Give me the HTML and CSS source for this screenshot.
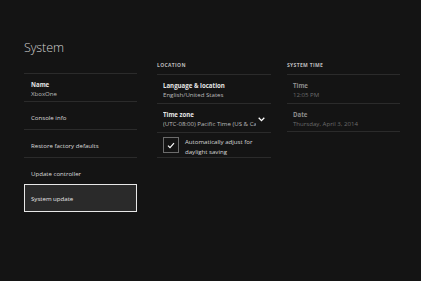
FILE: index.html
```html
<!DOCTYPE html>
<html>
<head>
<meta charset="utf-8">
<link rel="stylesheet" href="styles.css">
</head>
<body>
<div class="page">
  <h1 class="title">System</h1>
  <div class="columns">
    <div class="col col-left">
      <div class="row two">
        <div class="label">Name</div>
        <div class="value">XboxOne</div>
      </div>
      <div class="row one">Console info</div>
      <div class="row one">Restore factory defaults</div>
      <div class="row one">Update controller</div>
      <div class="row one selected">System update</div>
    </div>
    <div class="col col-mid">
      <div class="head">LOCATION</div>
      <div class="row two">
        <div class="label">Language &amp; location</div>
        <div class="value">English/United States</div>
      </div>
      <div class="row two tz">
        <div class="tz-text">
          <div class="label">Time zone</div>
          <div class="value clip">(UTC-08:00) Pacific Time (US &amp; Canada)</div>
        </div>
        <svg class="chev" width="7" height="5" viewBox="0 0 7 5"><path d="M0.7 0.8 L3.5 3.6 L6.3 0.8" fill="none" stroke="#fff" stroke-width="1.3"/></svg>
      </div>
      <div class="row check">
        <div class="box"><svg width="8" height="7" viewBox="0 0 8 7"><path d="M1 3.6 L3 5.6 L7 1.2" fill="none" stroke="#fff" stroke-width="1.2"/></svg></div>
        <div class="check-text">Automatically adjust for<br>daylight saving</div>
      </div>
    </div>
    <div class="col col-right">
      <div class="head">SYSTEM TIME</div>
      <div class="row two dim">
        <div class="label">Time</div>
        <div class="value">12:05 PM</div>
      </div>
      <div class="row two dim">
        <div class="label">Date</div>
        <div class="value">Thursday, April 3, 2014</div>
      </div>
    </div>
  </div>
</div>
</body>
</html>
```
FILE: styles.css
```css
html, body {
  margin: 0;
  padding: 0;
  background: #141414;
  width: 421px;
  height: 281px;
  overflow: hidden;
}
.page {
  padding: 39px 0 0 24px;
  font-family: "Open Sans", "Noto Sans", sans-serif;
  color: #d8d8d8;
}
.title {
  margin: 0;
  font-weight: 300;
  font-size: 12.5px;
  line-height: 17px;
  color: #cfcfcf;
  letter-spacing: -0.1px;
}
.columns {
  display: flex;
}
.col-left {
  width: 113px;
  margin-right: 20px;
  padding-top: 17px;
}
.col-mid {
  width: 114px;
  margin-right: 16px;
}
.col-right {
  width: 113px;
}
.head {
  height: 18px;
  font-size: 5px;
  font-weight: 700;
  letter-spacing: 0.35px;
  color: #bdbdbd;
  line-height: 18px;
}
.row {
  border-top: 1px solid #2b2b2b;
  box-sizing: border-box;
  font-size: 6.1px;
}
.col-left .row {
  height: 28px;
  padding-left: 7px;
}
.col-mid .row, .col-right .row {
  height: 29px;
  padding-left: 6px;
}
.row.two {
  padding-top: 6px;
  line-height: 9px;
}
.row.one {
  display: flex;
  align-items: center;
  padding-top: 3px;
  color: #dcdcdc;
}
.label {
  font-weight: 700;
  color: #e6e6e6;
}
.value {
  color: #bcbcbc;
}
.row.selected {
  background: #2a2a2a;
  border: 1.5px solid #e8e8e8;
  margin-top: -1px;
  padding-top: 0;
  padding-left: 6px;
  color: #e8e8e8;
}
.row.tz {
  display: flex;
  align-items: flex-start;
}
.tz-text {
  width: 93px;
  overflow: hidden;
}
.clip {
  white-space: nowrap;
  overflow: hidden;
}
.chev {
  margin-top: 7px;
  margin-left: 2px;
}
.row.check {
  display: flex;
  align-items: flex-start;
  height: 26px;
  padding-top: 4px;
  border-bottom: 1px solid #2b2b2b;
}
.box {
  width: 16px;
  height: 16px;
  box-sizing: border-box;
  border: 1px solid #6c6c6c;
  display: flex;
  align-items: center;
  justify-content: center;
  flex-shrink: 0;
}
.check-text {
  margin-left: 6px;
  line-height: 9.7px;
  color: #d8d8d8;
}
.col-right .row:last-child {
  border-bottom: 1px solid #2b2b2b;
}
.dim .label {
  color: #8c8c8c;
}
.dim .value {
  color: #6c6c6c;
}
```
